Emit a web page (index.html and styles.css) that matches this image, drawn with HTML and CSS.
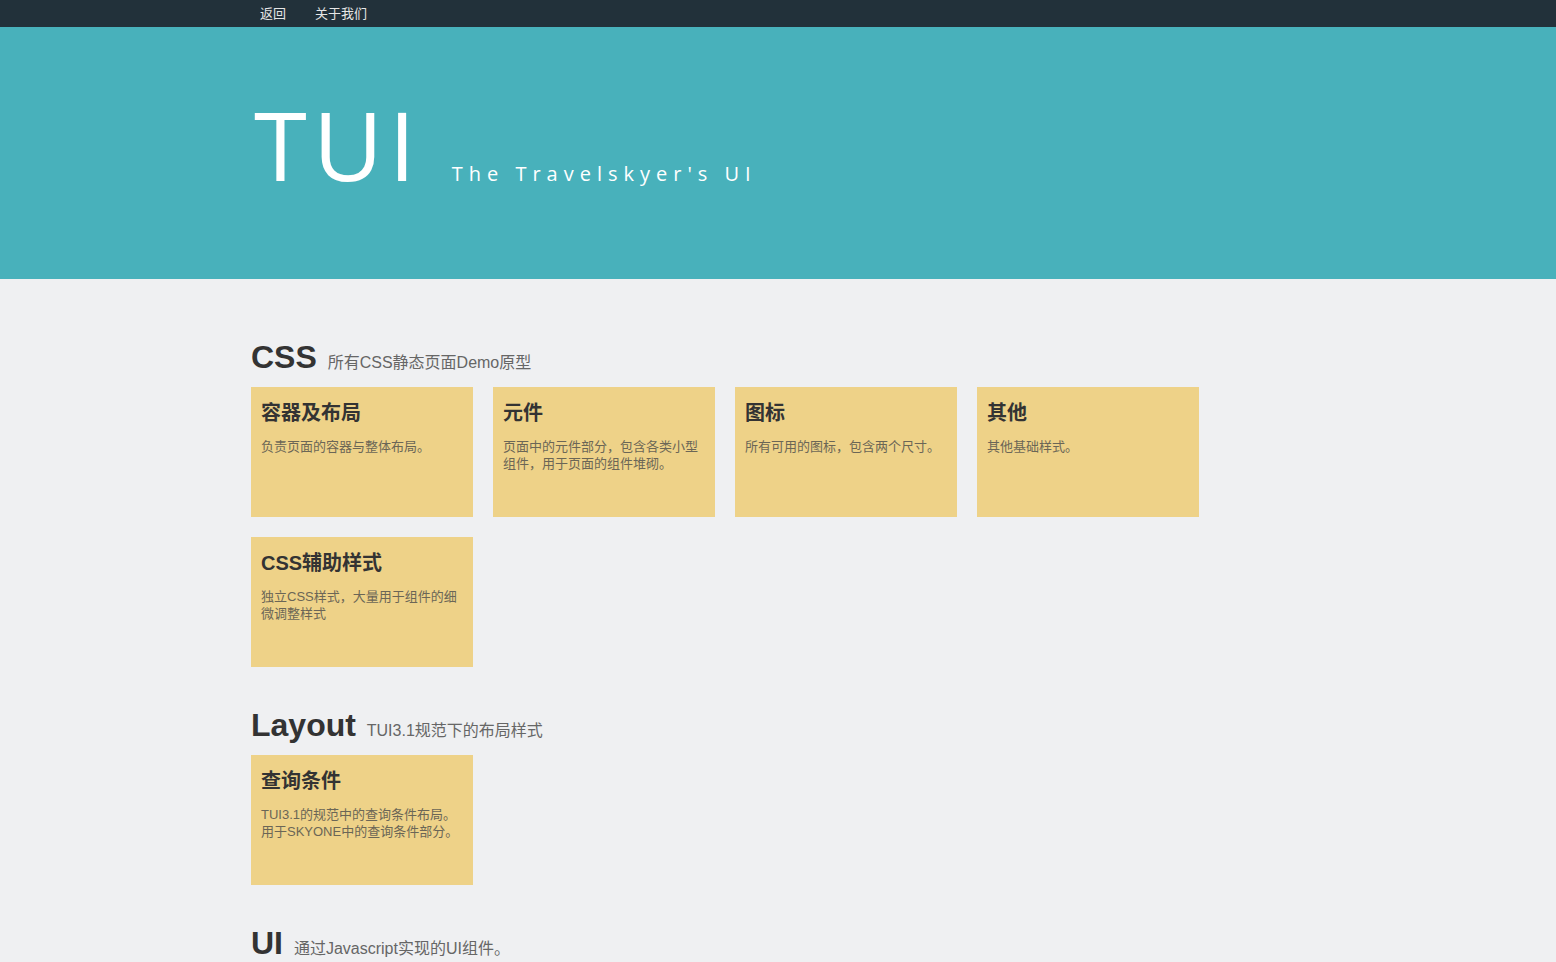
FILE: index.html
```html
<!DOCTYPE html>
<html lang="zh-CN">
<head>
<meta charset="utf-8">
<title>TUI</title>
<link rel="stylesheet" href="styles.css">
</head>
<body>
<nav class="topbar">
  <div class="container topbar-inner">
    <a class="topbar-link" href="#">返回</a>
    <a class="topbar-link" href="#">关于我们</a>
  </div>
</nav>
<header class="hero">
  <div class="container hero-inner">
    <h1 class="hero-title">TUI</h1>
    <span class="hero-sub">The Travelskyer's UI</span>
  </div>
</header>
<main class="container main">
  <section class="section">
    <h2 class="section-title">CSS <small class="section-sub">所有CSS静态页面Demo原型</small></h2>
    <div class="cards">
      <div class="card"><h3 class="card-title">容器及布局</h3><p class="card-desc">负责页面的容器与整体布局。</p></div>
      <div class="card"><h3 class="card-title">元件</h3><p class="card-desc">页面中的元件部分，包含各类小型组件，用于页面的组件堆砌。</p></div>
      <div class="card"><h3 class="card-title">图标</h3><p class="card-desc">所有可用的图标，包含两个尺寸。</p></div>
      <div class="card"><h3 class="card-title">其他</h3><p class="card-desc">其他基础样式。</p></div>
      <div class="card"><h3 class="card-title">CSS辅助样式</h3><p class="card-desc">独立CSS样式，大量用于组件的细微调整样式</p></div>
    </div>
  </section>
  <section class="section">
    <h2 class="section-title">Layout <small class="section-sub">TUI3.1规范下的布局样式</small></h2>
    <div class="cards">
      <div class="card"><h3 class="card-title">查询条件</h3><p class="card-desc">TUI3.1的规范中的查询条件布局。用于SKYONE中的查询条件部分。</p></div>
    </div>
  </section>
  <section class="section">
    <h2 class="section-title">UI <small class="section-sub">通过Javascript实现的UI组件。</small></h2>
  </section>
</main>
</body>
</html>
```

FILE: styles.css
```css
* { box-sizing: border-box; }
html, body { margin: 0; padding: 0; }
body {
  background: #eff0f2;
  font-family: "Liberation Sans", Arial, "Noto Sans CJK SC", sans-serif;
  color: #333;
  font-size: 13px;
}
.container {
  width: 1054px;
  margin: 0 auto;
}
.topbar {
  background: #22313a;
  height: 27px;
}
.topbar-inner {
  display: flex;
  align-items: center;
  height: 27px;
}
.topbar-link {
  color: #e6e6e6;
  text-decoration: none;
  font-size: 13px;
  padding: 0 9px;
  margin-right: 11px;
  line-height: 25px;
}
.hero {
  background: #48b1bb;
  height: 252px;
}
.hero-inner {
  display: flex;
  align-items: baseline;
  padding-top: 67px;
}
.hero-title {
  margin: 0;
  font-family: "Open Sans", "Noto Sans", sans-serif;
  font-weight: 400;
  font-size: 96px;
  line-height: 100px;
  letter-spacing: 6px;
  color: #fff;
  padding-left: 3px;
}
.hero-sub {
  font-family: "Open Sans", "Noto Sans", sans-serif;
  font-weight: 400;
  font-size: 20px;
  letter-spacing: 6px;
  color: #fff;
  margin-left: 30px;
}
.main {
  padding-top: 20px;
}
.section {
  padding-top: 41px;
}
.section-title {
  margin: 0 0 12px;
  font-size: 32px;
  line-height: 35px;
  font-weight: 700;
  color: #333;
}
.section-sub {
  font-size: 16px;
  line-height: 16px;
  font-weight: 400;
  color: #666;
  margin-left: 2px;
}
.cards {
  display: grid;
  grid-template-columns: repeat(4, 222px);
  gap: 20px;
}
.card {
  background: #eed288;
  height: 130px;
  padding: 10px;
}
.card-title {
  margin: 5px 0 14px;
  font-size: 20px;
  line-height: 22px;
  font-weight: 700;
  color: #333;
}
.card-desc {
  margin: 0;
  font-size: 13px;
  line-height: 17px;
  color: #6b6656;
}
```
